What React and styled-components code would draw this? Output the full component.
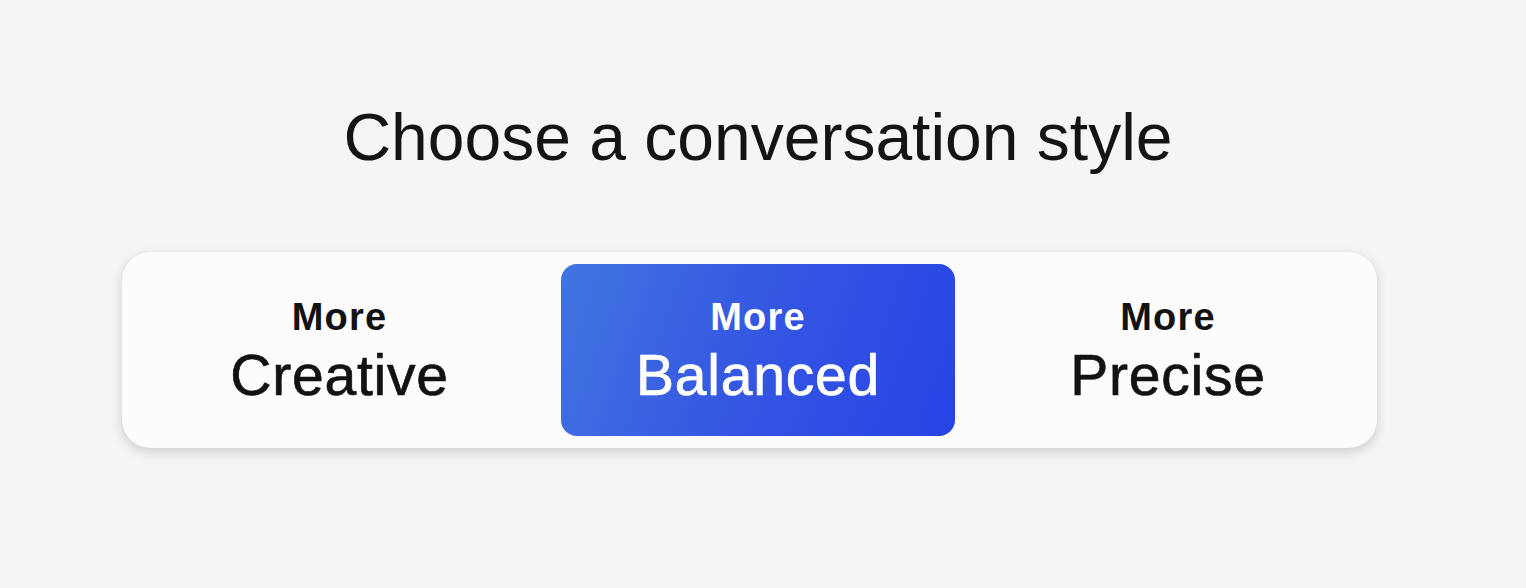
import React, { useState } from 'react'
import styled, { createGlobalStyle } from 'styled-components'

const styles = [
  { id: 'creative', label: 'Creative' },
  { id: 'balanced', label: 'Balanced' },
  { id: 'precise', label: 'Precise' },
]

function App() {
  const [ selected, setSelected ] = useState('balanced')

  return (
    <>
      <GlobalStyle />
      <Page>
        <Title>Choose a conversation style</Title>
        <Picker>
          { styles.map(style => (
            <Option
              key={style.id}
              active={selected === style.id}
              onClick={ () => setSelected(style.id) }
            >
              <Small>More</Small>
              <Big>{style.label}</Big>
            </Option>
          ))}
        </Picker>
      </Page>
    </>
  )
}

export default App

const GlobalStyle = createGlobalStyle`
  html, body {
    margin: 0;
    padding: 0;
    background: #f5f5f5;
  }
  body {
    font-family: "Liberation Sans", Arial, Helvetica, sans-serif;
    color: #111111;
  }
`

const Page = styled.div`
  min-height: 588px;
  box-sizing: border-box;
  padding: 99px 149px 0 122px;
  display: flex;
  flex-direction: column;
`

const Title = styled.h1`
  margin: 0;
  padding-left: 17px;
  text-align: center;
  font-size: 66px;
  line-height: 76px;
  font-weight: 400;
  color: #141414;
`

const Picker = styled.div`
  margin-top: 77px;
  display: grid;
  grid-template-columns: 1fr 394px 394px;
  column-gap: 16px;
  padding: 12px;
  background: #fcfcfc;
  border-radius: 28px;
  box-shadow: 0 4px 12px rgba(0, 0, 0, 0.16), 0 0 1px rgba(0, 0, 0, 0.1);
`

const Option = styled.button.withConfig({ shouldForwardProp: p => p !== 'active' })`
  height: 172px;
  box-sizing: border-box;
  padding: 31px 0 0;
  border: none;
  border-radius: 16px;
  display: flex;
  flex-direction: column;
  align-items: center;
  font-family: inherit;
  cursor: pointer;
  color: ${ props => props.active ? '#ffffff' : '#121212' };
  background: ${ props => props.active
    ? 'linear-gradient(110deg, #4274e0 0%, #3456e2 50%, #2644e6 100%)'
    : 'transparent' };
`

const Small = styled.span`
  font-size: 38px;
  line-height: 44px;
  font-weight: 700;
  letter-spacing: 1.2px;
`

const Big = styled.span`
  font-size: 57px;
  line-height: 72px;
  font-weight: 400;
  letter-spacing: 0.8px;
  -webkit-text-stroke: 0.7px currentColor;
`
